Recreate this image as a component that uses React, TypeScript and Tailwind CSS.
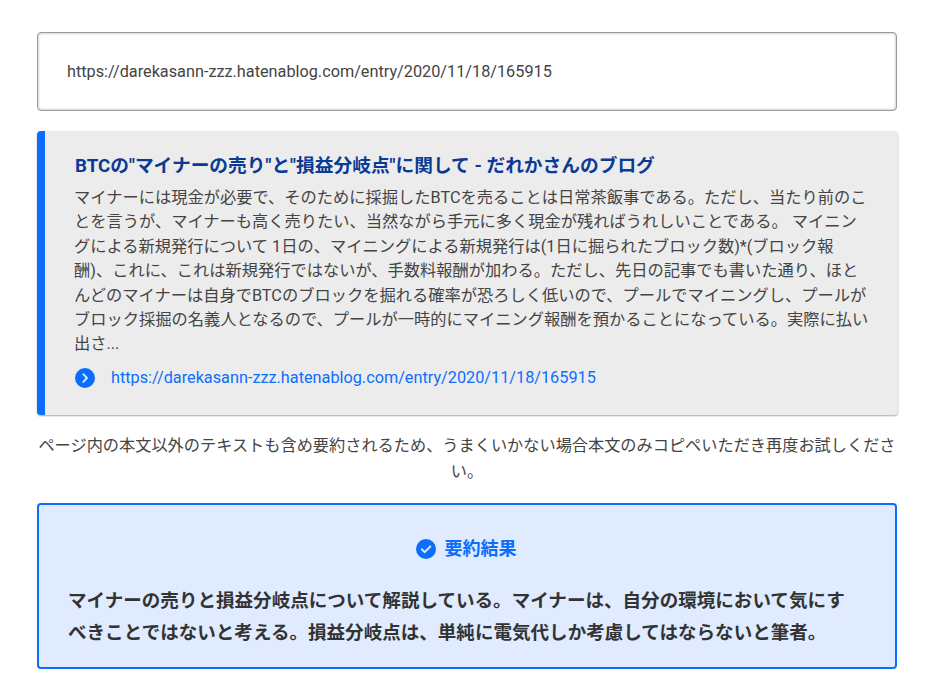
export default function App() {
  return (
    <div className="min-h-[680px] bg-white px-[37px] pt-8 font-['Roboto','Noto_Sans_CJK_JP',sans-serif] text-[#444]">
      <div className="flex h-[79px] w-[860px] items-center rounded-[4px] border border-[#9a9a9a] px-[29px] pt-[2px] text-[16.25px] shadow-[inset_0_0_3px_rgba(0,0,0,0.35)]">
        https://darekasann-zzz.hatenablog.com/entry/2020/11/18/165915
      </div>
      <div className="mt-5 flex h-[284px] w-[861px] flex-col rounded-[4px] border-l-8 border-[#0d6efd] bg-[#ececec] pl-[29px] pr-[28px] pt-[23px] shadow-[0_1px_2px_rgba(0,0,0,0.35)]">
        <h3 className="pl-px text-[18.72px] leading-6 font-bold text-[#0a3a94]">BTCの"マイナーの売り"と"損益分岐点"に関して - だれかさんのブログ</h3>
        <p className="mt-[8px] text-[16.25px] leading-[24.4px] text-[#444]">
          マイナーには現金が必要で、そのために採掘したBTCを売ることは日常茶飯事である。ただし、当たり前のことを言うが、マイナーも高く売りたい、当然ながら手元に多く現金が残ればうれしいことである。 マイニングによる新規発行について 1日の、マイニングによる新規発行は(1日に掘られたブロック数)*(ブロック報酬)、これに、これは新規発行ではないが、手数料報酬が加わる。ただし、先日の記事でも書いた通り、ほとんどのマイナーは自身でBTCのブロックを掘れる確率が恐ろしく低いので、プールでマイニングし、プールがブロック採掘の名義人となるので、プールが一時的にマイニング報酬を預かることになっている。実際に払い出さ...
        </p>
        <div className="mt-[9px] flex items-center gap-4 pl-px text-[16.25px] leading-6 text-[#0d6efd]">
          <svg viewBox="0 0 20 20" className="h-5 w-5">
            <circle cx="10" cy="10" r="10" fill="#0d6efd" />
            <path d="M8.3 6.2 L12 10 L8.3 13.8" fill="none" stroke="#dbe8ff" strokeWidth="1.8" strokeLinecap="round" strokeLinejoin="round" />
          </svg>
          <span>https://darekasann-zzz.hatenablog.com/entry/2020/11/18/165915</span>
        </div>
      </div>
      <p className="mt-[18px] w-[860px] text-center text-[16.2px] leading-[25.5px] text-[#444]">
        ページ内の本文以外のテキストも含め要約されるため、うまくいかない場合本文のみコピペいただき再度お試しください。
      </p>
      <div className="mt-[19px] h-[166px] w-[860px] rounded-[4px] border-2 border-[#0d6efd] bg-[#e0ebff] pl-[29px] pr-[44px] pt-[32px]">
        <div className="flex items-center justify-center gap-[9px] pl-[13px] text-lg leading-6 font-bold text-[#0d6efd]">
          <svg viewBox="0 0 20 20" className="h-5 w-5">
            <circle cx="10" cy="10" r="10" fill="#0d6efd" />
            <path d="M5.8 10.3 L8.7 13.1 L14.3 7.5" fill="none" stroke="#dbe8ff" strokeWidth="2" strokeLinecap="round" strokeLinejoin="round" />
          </svg>
          <span>要約結果</span>
        </div>
        <p className="mt-6 text-[18.56px] leading-[32px] font-bold text-[#333]">
          マイナーの売りと損益分岐点について解説している。マイナーは、自分の環境において気にすべきことではないと考える。損益分岐点は、単純に電気代しか考慮してはならないと筆者。
        </p>
      </div>
    </div>
  );
}
